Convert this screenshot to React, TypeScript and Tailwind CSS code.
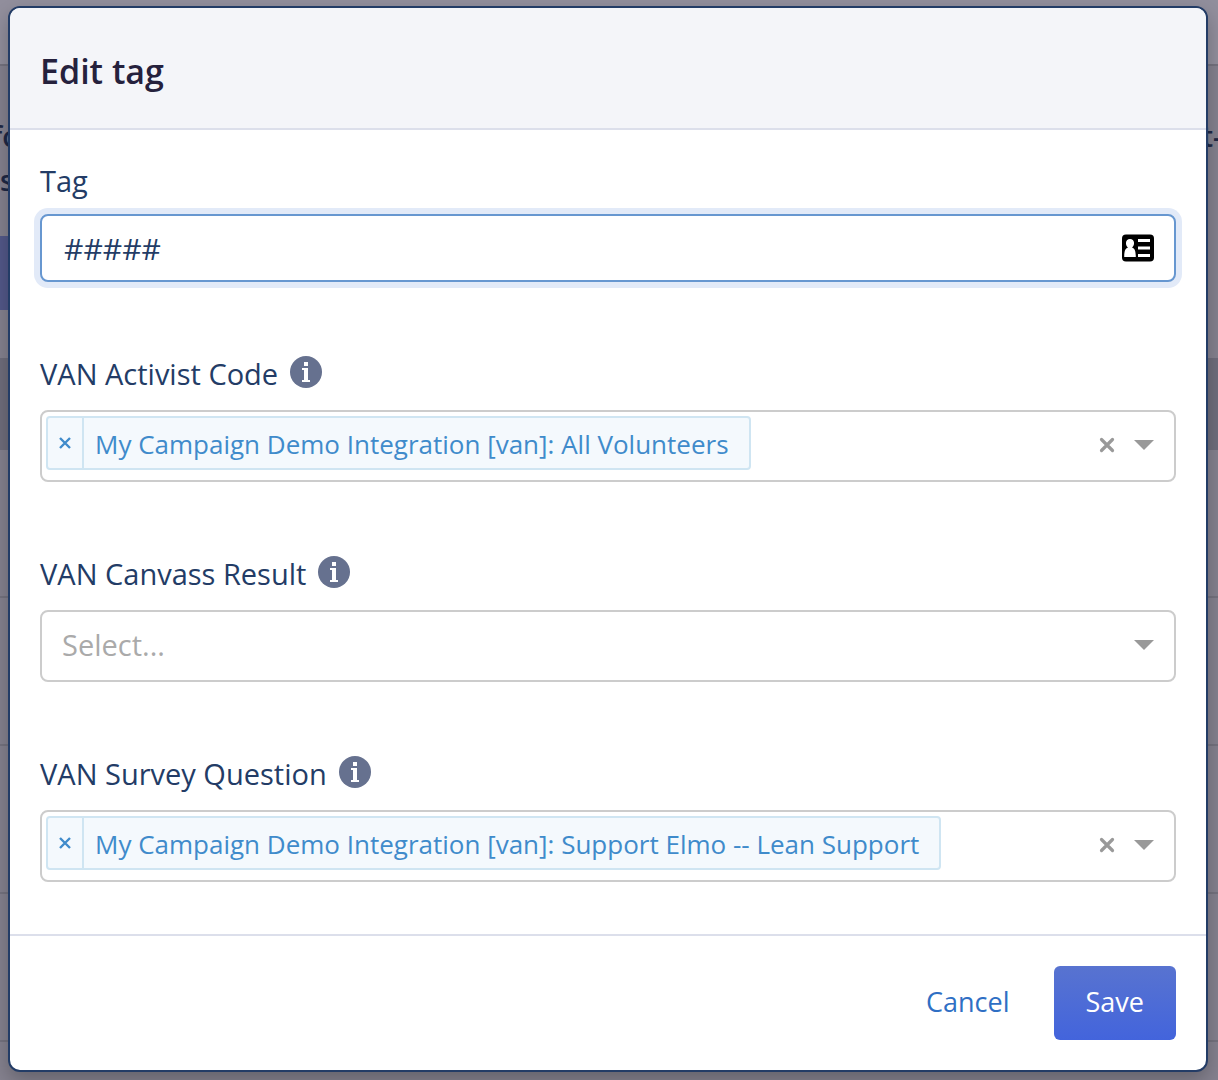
import { useState } from "react";
import type { ReactNode } from "react";

const InfoIcon = () => (
    <svg viewBox="0 0 32 32" className="size-8 shrink-0" aria-hidden="true">
        <circle cx="16" cy="16" r="16" fill="#66718f" />
        <path fill="#fff" d="M14 6h4v4h-4zM12 12h6v12h2v2h-8v-2h2V14h-2z" />
    </svg>
);

const ContactCardIcon = () => (
    <svg viewBox="0 0 32 28" className="h-7 w-8" aria-hidden="true">
        <rect width="32" height="27" y=".5" rx="4" fill="#000" />
        <path fill="#fff" d="M8 5a4 4 0 0 1 4 4.500c0 1.800-.8 3.200-2 4 3 .8 3.800 4.500 3.800 9.500H2.200c0-5 .8-8.700 3.800-9.500-1.200-.8-2-2.200-2-4A4 4 0 0 1 8 5z" />
        <path fill="#fff" d="M16 5h12v3H16zM16 12.500h12v3H16zM16 20h12v3H16z" />
    </svg>
);

const CrossIcon = () => (
    <svg viewBox="0 0 16 16" className="size-4" aria-hidden="true">
        <path d="M2.500 2.500l11 11M13.500 2.500l-11 11" stroke="#999" strokeWidth="3.200" strokeLinecap="round" />
    </svg>
);

const ArrowIcon = () => (
    <svg viewBox="0 0 20 10" className="h-[10px] w-5" aria-hidden="true">
        <path d="M0 0h20L10 10z" fill="#999" />
    </svg>
);

interface IField {
    id: string;
    label: string;
    children: ReactNode;
}

const Field = ({ id, label, children }: IField) => (
    <div className="flex flex-col gap-[14px]">
        <div className="flex h-11 items-center gap-3">
            <label htmlFor={id} className="text-[29px] leading-[42px] text-[#233c66]">{label}</label>
            <button type="button" aria-label={`About ${label}`} className="pb-1"><InfoIcon /></button>
        </div>
        {children}
    </div>
);

interface IMultiSelect {
    id: string;
    initial: string[];
}

const MultiSelect = ({ id, initial }: IMultiSelect) => {
    const [values, setValues] = useState(initial);

    return (
        <div className="flex min-h-[72px] items-center rounded-lg border-2 border-[#ccc] bg-white pr-5 pl-1">
            <div className="flex min-w-0 flex-1 self-start pt-1">
                {values.map((value) => (
                    <div key={value} className="flex h-[54px] rounded border-2 border-[#cfe5f2] bg-[#f4f9fd] text-[#3f8bcb]">
                        <button
                            type="button"
                            aria-label={`Remove ${value}`}
                            onClick={() => setValues(values.filter((v) => v !== value))}
                            className="flex w-9 items-center justify-center border-r-2 border-[#cfe5f2]"
                        >
                            <svg viewBox="0 0 12 12" className="size-3" aria-hidden="true">
                                <path d="M1 1l10 10M11 1L1 11" stroke="#3f8bcb" strokeWidth="2.400" />
                            </svg>
                        </button>
                        <span className="pr-5 pl-[11px] text-[26px] leading-[52px] whitespace-nowrap">{value}</span>
                    </div>
                ))}
                <input id={id} type="text" role="combobox" aria-expanded="false" className="w-2 min-w-0 flex-1 outline-none" />
            </div>
            <div className="flex items-center gap-[19px] pb-[2px]">
                <button type="button" aria-label="Clear all" onClick={() => setValues([])}><CrossIcon /></button>
                <button type="button" aria-label="Open menu"><ArrowIcon /></button>
            </div>
        </div>
    );
};

// Page that stays visible around the edges of the modal
const PageBehind = () => (
    <div className="absolute inset-0 overflow-hidden bg-[#85828f] text-[28px] font-semibold text-[#1f2845]" aria-hidden="true">
        <div className="h-[66px] border-b-2 border-[#75737f] bg-[#928f9d]" />
        <div className="flex h-[170px] justify-between pt-12">
            <div className="-ml-2 leading-[44px]">
                <p>fo</p>
                <p className="pl-2">s</p>
            </div>
            <p className="-mr-1 leading-[44px]">t-</p>
        </div>
        <div className="h-[74px] w-40 bg-[#535889]" />
        <div className="mt-12 h-[92px] bg-[#6f6d7c]" />
        <div className="h-[148px] border-b-2 border-[#75737f]" />
        <div className="h-[148px] border-b-2 border-[#75737f]" />
        <div className="h-[148px] border-b-2 border-[#75737f]" />
        <div className="h-[148px] border-b-2 border-[#75737f]" />
    </div>
);

const App = () => {
    const [tag, setTag] = useState("#####");

    return (
        <div className="relative min-h-screen font-['Open_Sans',sans-serif]">
            <PageBehind />
            <div className="relative pt-[6px] pr-[10px] pb-2 pl-2">
                <form
                    role="dialog"
                    aria-labelledby="modal-title"
                    onSubmit={(e) => e.preventDefault()}
                    className="overflow-hidden rounded-xl border-2 border-[#233c66] bg-white shadow-[0_8px_20px_rgba(0,0,0,0.25)]"
                >
                    <header className="border-b-2 border-[#dcdfeb] bg-[#f4f5f9] px-[30px] pt-[39px] pb-[33px]">
                        <h2 id="modal-title" className="text-[34px] leading-[48px] font-semibold text-[#25213d]">Edit tag</h2>
                    </header>

                    <div className="flex flex-col gap-[70px] px-[30px] pt-[30px] pb-[52px]">
                        <div className="flex flex-col gap-3">
                            <label htmlFor="tag" className="text-[29px] leading-[42px] text-[#233c66]">Tag</label>
                            <div className="flex h-[68px] items-center rounded-lg border-2 border-[#6797d0] bg-white pr-5 pl-[22px] ring-6 ring-[#e2eaf8]">
                                <input
                                    id="tag"
                                    type="text"
                                    value={tag}
                                    onChange={(e) => setTag(e.target.value)}
                                    className="min-w-0 flex-1 text-[30px] text-[#233c66] outline-none"
                                />
                                <button type="button" aria-label="Fill in contact"><ContactCardIcon /></button>
                            </div>
                        </div>

                        <Field id="activist-code" label="VAN Activist Code">
                            <MultiSelect id="activist-code" initial={["My Campaign Demo Integration [van]: All Volunteers"]} />
                        </Field>

                        <Field id="canvass-result" label="VAN Canvass Result">
                            <div className="grid items-center">
                                <select
                                    id="canvass-result"
                                    className="col-start-1 row-start-1 h-[72px] w-full appearance-none rounded-lg border-2 border-[#ccc] bg-white px-5 pb-[2px] text-[29px] text-[#aaa]"
                                >
                                    <option>Select...</option>
                                </select>
                                <div className="pointer-events-none col-start-1 row-start-1 justify-self-end pr-[22px] pb-[2px]"><ArrowIcon /></div>
                            </div>
                        </Field>

                        <Field id="survey-question" label="VAN Survey Question">
                            <MultiSelect id="survey-question" initial={["My Campaign Demo Integration [van]: Support Elmo -- Lean Support"]} />
                        </Field>
                    </div>

                    <footer className="flex items-center justify-end gap-3 border-t-2 border-[#dcdfeb] p-[30px]">
                        <button type="button" className="h-[74px] px-8 pb-[2px] text-[27px] text-[#2f6fc4]">Cancel</button>
                        <button type="submit" className="h-[74px] rounded-md bg-linear-to-b from-[#5873d0] to-[#4364dc] px-8 pb-[2px] text-[27px] text-white">Save</button>
                    </footer>
                </form>
            </div>
        </div>
    );
};

export default App;
